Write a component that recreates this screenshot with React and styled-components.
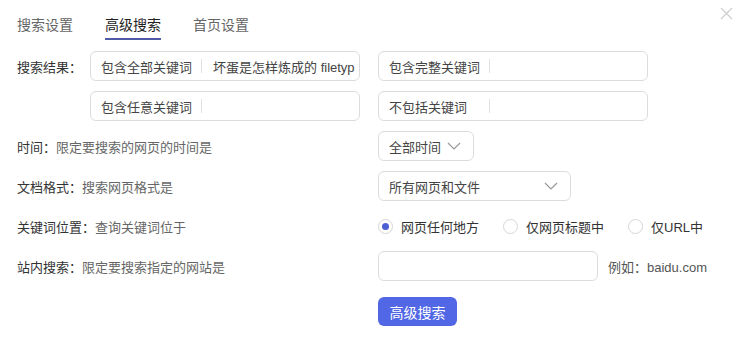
import React from "react";
import styled, { createGlobalStyle } from "styled-components";

const GlobalStyle = createGlobalStyle`
  html, body {
    margin: 0;
    padding: 0;
    background: #fff;
  }
  body {
    font-family: "Liberation Sans", "Noto Sans CJK SC", sans-serif;
    color: #333;
  }
`;

const Dialog = styled.div`
  position: relative;
  width: 744px;
  height: 347px;
  background: #fff;
  overflow: hidden;
`;

const CloseBtn = styled.div`
  position: absolute;
  top: 6px;
  right: 11px;
  width: 13px;
  height: 13px;
  cursor: pointer;
`;

const Tabs = styled.div`
  display: flex;
  gap: 32px;
  padding: 15px 0 0 17px;
  height: 38px;
  box-sizing: border-box;
`;

const Tab = styled.div`
  font-size: 14px;
  line-height: 20px;
  height: 23px;
  color: ${(p) => (p.$active ? "#222" : "#666")};
  border-bottom: 2px solid ${(p) => (p.$active ? "#4f5ba6" : "transparent")};
  cursor: pointer;
`;

const Form = styled.div`
  display: flex;
  flex-direction: column;
  gap: 10px;
  padding: 13px 0 0 17px;
`;

const Row = styled.div`
  display: flex;
  align-items: center;
  height: 30px;
`;

const Left = styled.div`
  width: 361px;
  display: flex;
  align-items: center;
`;

const Right = styled.div`
  display: flex;
  align-items: center;
`;

const Label = styled.span`
  font-size: 13px;
  color: #333;
  width: ${(p) => (p.$fixed ? "73px" : "auto")};
  white-space: nowrap;
`;

const Desc = styled.span`
  font-size: 13px;
  color: #666;
  white-space: nowrap;
`;

const Box = styled.div`
  box-sizing: border-box;
  width: ${(p) => p.$w}px;
  height: 30px;
  border: 1px solid #dcdcdc;
  border-radius: 6px;
  display: flex;
  align-items: center;
  padding: 0 10px;
  font-size: 13px;
  color: #444;
  overflow: hidden;
  white-space: nowrap;
`;

const Sep = styled.span`
  width: 1px;
  height: 14px;
  background: #e2e2e2;
  margin: 0 11px 0 ${(p) => p.$ml || 9}px;
  flex-shrink: 0;
`;

const Value = styled.span`
  color: #444;
`;

const Select = styled(Box)`
  justify-content: space-between;
  padding: 0 12px 0 10px;
`;

const Radio = styled.label`
  display: flex;
  align-items: center;
  gap: 8px;
  font-size: 13px;
  color: #333;
  margin-right: ${(p) => p.$mr}px;
`;

const Circle = styled.span`
  box-sizing: border-box;
  width: 15px;
  height: 15px;
  border-radius: 50%;
  border: 1px solid #d6d6d6;
  display: flex;
  align-items: center;
  justify-content: center;
  &::after {
    content: "";
    width: 7px;
    height: 7px;
    border-radius: 50%;
    background: ${(p) => (p.$on ? "#4e5fd6" : "transparent")};
  }
`;

const Hint = styled.span`
  font-size: 13px;
  color: #555;
  margin-left: 10px;
`;

const Button = styled.button`
  margin-top: 6px;
  margin-left: 361px;
  width: 79px;
  height: 29px;
  border: none;
  border-radius: 6px;
  background: #5267e6;
  color: #fff;
  font-size: 14px;
  font-family: "Liberation Sans", "Noto Sans CJK SC", sans-serif;
  cursor: pointer;
`;

const Chevron = () => (
  <svg width="14" height="8" viewBox="0 0 14 8" fill="none">
    <path d="M1 1l6 6 6-6" stroke="#999" strokeWidth="1.2" />
  </svg>
);

function App() {
  return (
    <Dialog>
      <GlobalStyle />
      <CloseBtn>
        <svg width="13" height="13" viewBox="0 0 13 13">
          <path d="M1 1l11 11M12 1L1 12" stroke="#cfcfcf" strokeWidth="1.3" />
        </svg>
      </CloseBtn>
      <Tabs>
        <Tab>搜索设置</Tab>
        <Tab $active>高级搜索</Tab>
        <Tab>首页设置</Tab>
      </Tabs>
      <Form>
        <Row>
          <Left>
            <Label $fixed>搜索结果：</Label>
            <Box $w={270}>
              包含全部关键词<Sep />
              <Value>坏蛋是怎样炼成的 filetyp</Value>
            </Box>
          </Left>
          <Right>
            <Box $w={270}>
              包含完整关键词<Sep />
            </Box>
          </Right>
        </Row>
        <Row>
          <Left>
            <Label $fixed />
            <Box $w={270}>
              包含任意关键词<Sep />
            </Box>
          </Left>
          <Right>
            <Box $w={270}>
              不包括关键词
              <Sep $ml={22} />
            </Box>
          </Right>
        </Row>
        <Row>
          <Left>
            <Label>时间：</Label>
            <Desc>限定要搜索的网页的时间是</Desc>
          </Left>
          <Right>
            <Select $w={96}>
              全部时间
              <Chevron />
            </Select>
          </Right>
        </Row>
        <Row>
          <Left>
            <Label>文档格式：</Label>
            <Desc>搜索网页格式是</Desc>
          </Left>
          <Right>
            <Select $w={193}>
              所有网页和文件
              <Chevron />
            </Select>
          </Right>
        </Row>
        <Row>
          <Left>
            <Label>关键词位置：</Label>
            <Desc>查询关键词位于</Desc>
          </Left>
          <Right>
            <Radio $mr={24}>
              <Circle $on />
              网页任何地方
            </Radio>
            <Radio $mr={24}>
              <Circle />
              仅网页标题中
            </Radio>
            <Radio $mr={0}>
              <Circle />
              仅URL中
            </Radio>
          </Right>
        </Row>
        <Row>
          <Left>
            <Label>站内搜索：</Label>
            <Desc>限定要搜索指定的网站是</Desc>
          </Left>
          <Right>
            <Box $w={220} />
            <Hint>例如：baidu.com</Hint>
          </Right>
        </Row>
        <Button>高级搜索</Button>
      </Form>
    </Dialog>
  );
}

export default App;
